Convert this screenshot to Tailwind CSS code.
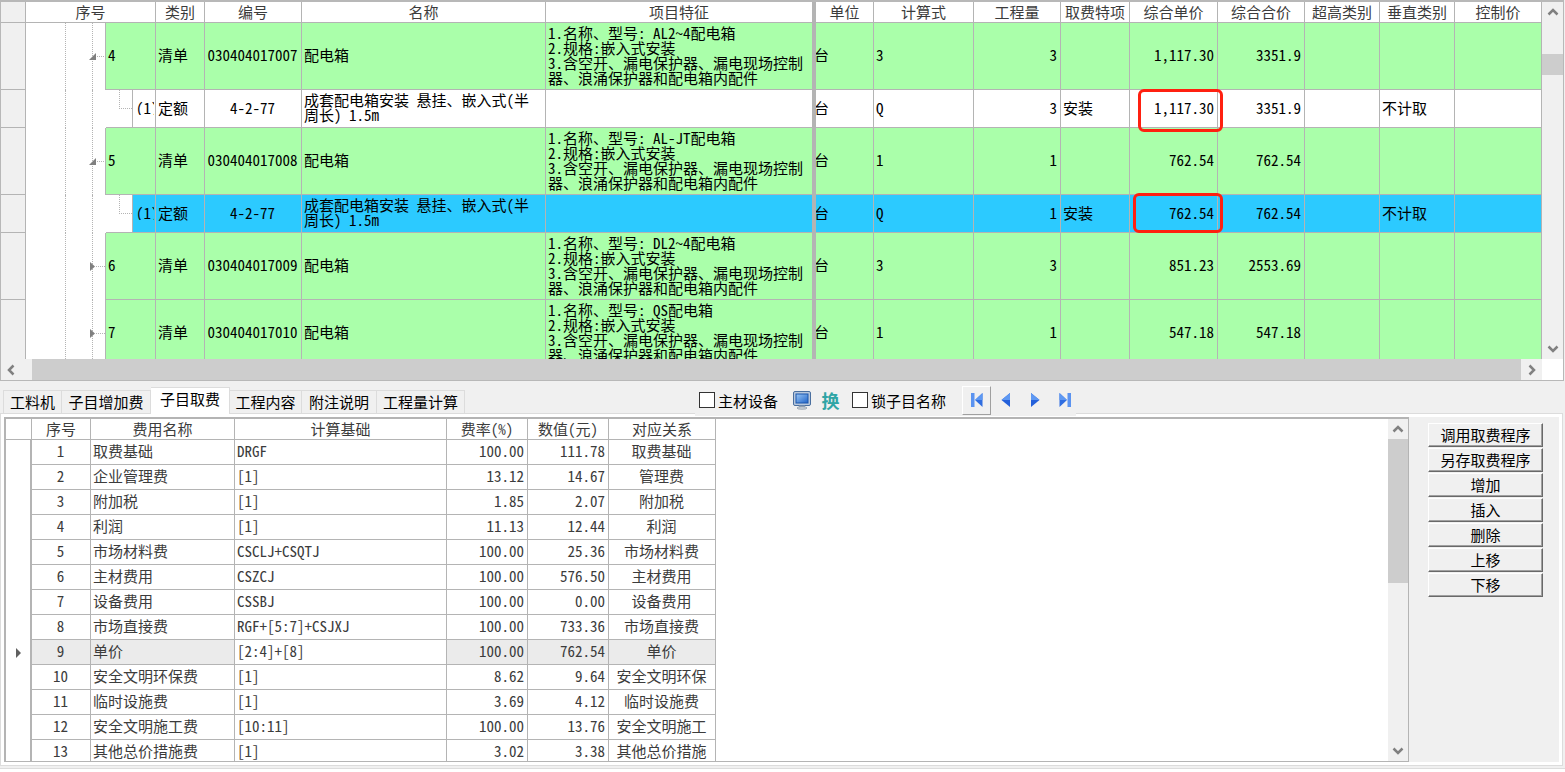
<!DOCTYPE html>
<html lang="zh-CN">
<head>
<meta charset="utf-8">
<title>子目取费</title>
<script src="https://cdn.jsdelivr.net/npm/@tailwindcss/browser@4"></script>
</head>
<body class="flex h-screen flex-col overflow-hidden bg-[#f0f0f0] font-['Noto_Sans_Mono_CJK_SC','Noto_Sans_CJK_SC',monospace] text-[15px] leading-[15px] text-black">

<!-- bill of quantities -->
<section class="mr-px flex h-[381px] shrink-0 flex-col border-x border-t-2 border-b border-[#b8b8b8] bg-white">
  <div class="flex min-h-0 flex-1">
    <div class="min-w-0 flex-1 overflow-hidden">
      <table class="w-full table-fixed border-separate border-spacing-0">
        <colgroup>
          <col class="w-[25px]"><col class="w-[40px]"><col class="w-[27px]"><col class="w-[13px]"><col class="w-[27px]"><col class="w-[23px]">
          <col class="w-[49px]"><col class="w-[97px]"><col class="w-[244px]"><col class="w-[270px]"><col class="w-[58px]"><col class="w-[100px]"><col class="w-[87px]"><col class="w-[69px]"><col class="w-[88px]"><col class="w-[87px]"><col class="w-[75px]"><col class="w-[75px]"><col>
        </colgroup>
        <thead>
          <tr class="h-[21px] text-[#3c3c3c] *:border-r *:border-b *:border-[#b4b4b4] *:p-0 *:pb-[2px] *:font-normal *:whitespace-nowrap">
            <th class="bg-[#f0f0f0]"></th><th colspan="5" scope="col">序号</th><th scope="col">类别</th><th scope="col">编号</th><th scope="col">名称</th><th scope="col" class="border-r-4!">项目特征</th><th scope="col">单位</th><th scope="col">计算式</th><th scope="col">工程量</th><th scope="col">取费特项</th><th scope="col">综合单价</th><th scope="col">综合合价</th><th scope="col">超高类别</th><th scope="col">垂直类别</th><th scope="col">控制价</th>
          </tr>
        </thead>
        <tbody id="bill"></tbody>
      </table>
    </div>
    <div class="flex w-[21px] shrink-0 flex-col items-center bg-[#f0f0f0]">
      <button type="button" aria-label="向上滚动" class="flex h-5 w-full items-center justify-center"><svg width="12" height="8" viewBox="0 0 12 8" fill="none" stroke="#808080" stroke-width="2.500"><path d="M1.500 6.500 6 2l4.500 4.500"/></svg></button>
      <div class="mt-8 h-[21px] w-full bg-[#cdcdcd]"></div>
      <button type="button" aria-label="向下滚动" class="mt-auto flex h-5 w-full items-center justify-center"><svg width="12" height="8" viewBox="0 0 12 8" fill="none" stroke="#808080" stroke-width="2.500"><path d="M1.500 1.500 6 6l4.500-4.500"/></svg></button>
    </div>
  </div>
  <div class="flex h-[21px] shrink-0">
    <button type="button" aria-label="向左滚动" class="flex w-[31px] items-center bg-[#f0f0f0] pl-[6px]"><svg width="8" height="12" viewBox="0 0 8 12" fill="none" stroke="#808080" stroke-width="2.500"><path d="M6.500 1.500 2 6l4.500 4.500"/></svg></button>
    <div class="flex-1 bg-[#cdcdcd]"></div>
    <button type="button" aria-label="向右滚动" class="flex w-[21px] items-center justify-center bg-[#f0f0f0]"><svg width="8" height="12" viewBox="0 0 8 12" fill="none" stroke="#808080" stroke-width="2.500"><path d="M1.500 1.500 6 6l-4.500 4.500"/></svg></button>
    <div class="w-[21px] bg-white"></div>
  </div>
</section>

<!-- tabs and toolbar -->
<div class="relative z-10 flex h-8 shrink-0 items-end pl-[3px]">
  <div role="tablist" class="flex flex-1 items-end whitespace-nowrap *:border *:border-b-0 *:border-[#dcdcdc]">
    <button type="button" role="tab" class="h-[23px] w-[59px] pb-[2px]">工料机</button>
    <button type="button" role="tab" class="h-[23px] w-[89px] border-l-0! pb-[2px]">子目增加费</button>
    <button type="button" role="tab" aria-selected="true" class="-mb-px h-[27px] w-[79px] border-l-0! bg-white pb-[5px]">子目取费</button>
    <button type="button" role="tab" class="h-[23px] w-[72px] border-l-0! pb-[2px]">工程内容</button>
    <button type="button" role="tab" class="h-[23px] w-[75px] border-l-0! pb-[2px]">附注说明</button>
    <button type="button" role="tab" class="h-[23px] w-[88px] border-l-0! pb-[2px]">工程量计算</button>
  </div>
  <div class="-mb-[3px] flex h-8 w-[870px] items-center">
    <div class="flex h-8 items-center bg-[#f0f0f0] pr-1 pl-1">
      <input id="mat" type="checkbox" class="size-4 appearance-none border border-[#333] bg-white"><label for="mat" class="ml-[3px] w-[60px] whitespace-nowrap">主材设备</label>
      <button type="button" aria-label="设备" class="ml-[14px]"><svg class="block" width="20" height="20" viewBox="0 0 20 20">
        <defs><linearGradient id="scr" x1="0" y1="0" x2="1" y2="1"><stop offset="0" stop-color="#9cc8f5"/><stop offset="1" stop-color="#1f63c8"/></linearGradient></defs>
        <rect x="1.500" y="1.500" width="17" height="14" rx="1.500" fill="#b8c8dc" stroke="#4a6f9f"/><rect x="4" y="4" width="12" height="9" fill="url(#scr)" stroke="#1d56ab"/><path d="M7 15.500h6v2H7z" fill="#8fa0b4"/><ellipse cx="10" cy="18" rx="5" ry="1.300" fill="#c9d0d8" stroke="#8a96a4" stroke-width=".7"/></svg></button>
      <button type="button" class="ml-[9px] w-[19px] text-lg leading-5 font-bold text-[#2fa5a5]">换</button>
      <input id="lock" type="checkbox" class="ml-[12px] size-4 appearance-none border border-[#333] bg-white"><label for="lock" class="ml-[3px] w-[75px] whitespace-nowrap">锁子目名称</label>
      <button type="button" aria-label="首条" class="ml-4 flex h-[29px] w-[29px] items-center justify-center border border-t-white border-r-[#a0a0a0] border-b-[#a0a0a0] border-l-white"><svg width="14" height="16" viewBox="0 0 14 16"><path d="M1 1h3.500v14H1z" fill="#5b93f0"/><path d="M12.500 1v14L5 8z" fill="#2f6de0"/><path d="M12.500 1 5 8h7.500z" fill="#5e98f2"/></svg></button>
      <button type="button" aria-label="上一条" class="ml-[10px]"><svg class="block" width="10" height="16" viewBox="0 0 10 16"><path d="M9 1v14L.5 8z" fill="#2460da"/><path d="M9 1 .5 8H9z" fill="#5e98f2"/></svg></button>
      <button type="button" aria-label="下一条" class="ml-[19px]"><svg class="block" width="10" height="16" viewBox="0 0 10 16"><path d="M1 1v14l8.500-7z" fill="#2460da"/><path d="M1 1l8.500 7H1z" fill="#5e98f2"/></svg></button>
      <button type="button" aria-label="末条" class="ml-[18px]"><svg class="block" width="14" height="16" viewBox="0 0 14 16"><path d="M9.500 1H13v14H9.500z" fill="#5b93f0"/><path d="M1.500 1v14L9 8z" fill="#2f6de0"/><path d="M1.500 1 9 8H1.500z" fill="#5e98f2"/></svg></button>
    </div>
  </div>
</div>

<!-- fee breakdown -->
<section class="mr-[2px] mb-[2px] flex min-h-0 flex-1 border border-[#dcdcdc] bg-white px-[3px] py-[3px]">
  <div class="flex min-w-0 flex-1 border-2 border-r border-b border-[#b4b4b4] bg-white text-[#3c3c3c]">
    <div class="min-w-0 flex-1 overflow-hidden">
      <table class="w-[710px] table-fixed border-separate border-spacing-0">
        <colgroup><col class="w-[26px]"><col class="w-[59px]"><col class="w-[144px]"><col class="w-[212px]"><col class="w-[81px]"><col class="w-[81px]"><col class="w-[107px]"></colgroup>
        <thead>
          <tr class="h-[21px] *:border-r *:border-b *:border-[#b4b4b4] *:p-0 *:pb-[2px] *:font-normal *:whitespace-nowrap"><th></th><th scope="col">序号</th><th scope="col">费用名称</th><th scope="col">计算基础</th><th scope="col">费率(%)</th><th scope="col">数值(元)</th><th scope="col">对应关系</th></tr>
        </thead>
        <tbody id="fees"></tbody>
      </table>
    </div>
    <div class="flex w-5 shrink-0 flex-col items-center bg-[#f0f0f0]">
      <button type="button" aria-label="向上滚动" class="flex h-5 w-full items-center justify-center"><svg width="12" height="8" viewBox="0 0 12 8" fill="none" stroke="#808080" stroke-width="2.500"><path d="M1.500 6.500 6 2l4.500 4.500"/></svg></button>
      <div class="h-36 w-full bg-[#cdcdcd]"></div>
      <button type="button" aria-label="向下滚动" class="mt-auto flex h-5 w-full items-center justify-center"><svg width="12" height="8" viewBox="0 0 12 8" fill="none" stroke="#808080" stroke-width="2.500"><path d="M1.500 1.500 6 6l4.500-4.500"/></svg></button>
    </div>
  </div>
  <div class="flex w-[150px] shrink-0 flex-col gap-px bg-[#f0f0f0] pt-[6px] pr-4 pl-[19px] *:h-6 *:shrink-0 *:border *:border-t-white *:border-r-[#696969] *:border-b-[#696969] *:border-l-white *:pb-[2px] *:shadow-[inset_-1px_-1px_#a0a0a0]">
    <button type="button">调用取费程序</button>
    <button type="button">另存取费程序</button>
    <button type="button">增加</button>
    <button type="button">插入</button>
    <button type="button">删除</button>
    <button type="button">上移</button>
    <button type="button">下移</button>
  </div>
</section>
<div class="h-1 shrink-0 border-t border-[#dcdcdc] bg-white"></div>

<script>
const item = (no, code, model, qty, price, total, open) => ({ no, code, model, qty, price, total, open });
const sub = (qty, price, total, selected, mark) => ({ child: true, qty, price, total, selected, mark });
const bill = [
  item('4', '030404017007', 'AL2~4', '3', '1,117.30', '3351.9', true),
  sub('3', '1,117.30', '3351.9', false, '-top-px -right-[6px] -bottom-[5px] left-2'),
  item('5', '030404017008', 'AL-JT', '1', '762.54', '762.54', true),
  sub('1', '762.54', '762.54', true, '-top-[2px] -right-[6px] -bottom-px left-[3px]'),
  item('6', '030404017009', 'DL2~4', '3', '851.23', '2553.69', false),
  item('7', '030404017010', 'QS', '1', '547.18', '547.18', false)
];
const line = 'border-r border-b border-[#b4b4b4]';
const tree = 'border-r border-dotted border-[#b4b4b4] bg-white p-0';
const arrow = open => open
  ? '<svg class="-ml-[5px] block" width="18" height="9" viewBox="0 0 18 9"><path d="M8 1v7H1z" fill="#808080"/><path d="M9 4.500h8" stroke="#b4b4b4" stroke-dasharray="1 1"/></svg>'
  : '<svg class="-ml-[5px] block" width="18" height="9" viewBox="0 0 18 9"><path d="M2 0v9l5-4.500z" fill="#808080"/><path d="M8 4.500h9" stroke="#b4b4b4" stroke-dasharray="1 1"/></svg>';
document.getElementById('bill').innerHTML = bill.map(r => {
  const bg = r.child ? (r.selected ? 'bg-[#2ccaff]' : 'bg-white') : 'bg-[#aaffaa]';
  const c = `${line} ${bg} pt-0 pr-[3px] pb-[3px] pl-[2px]`;
  const seq = r.child
    ? `<td class="bg-white p-0"></td><td class="border-r border-b border-r-[#b4b4b4] border-b-[#b4b4b4] bg-white p-0 align-top"><div class="ml-[13px] h-[19px] border-b border-l border-dotted border-[#b4b4b4]"></div></td><td class="${line} ${bg} pt-0 pr-px pb-[3px] pl-[3px]"><div class="overflow-hidden whitespace-nowrap">(1)</div></td>`
    : `<td class="border-r border-[#b4b4b4] bg-white p-0">${arrow(r.open)}</td><td colspan="2" class="${c}">${r.no}</td>`;
  const name = r.child ? '成套配电箱安装 悬挂、嵌入式(半<br>周长) 1.5m' : '配电箱';
  const feature = r.child ? '' : `1.名称、型号: ${r.model}配电箱<br>2.规格:嵌入式安装<br>3.含空开、漏电保护器、漏电现场控制<br>器、浪涌保护器和配电箱内配件`;
  const mark = r.mark ? `<div class="pointer-events-none absolute z-10 rounded-md border-[3px] border-[#ff2010] ${r.mark}"></div>` : '';
  return `<tr class="${r.child ? 'h-[38px]' : 'h-[67px]'}">
    <td class="${line} bg-[#f0f0f0] p-0"></td><td class="${tree}"></td><td class="${tree}"></td>${seq}
    <td class="${c}">${r.child ? '定额' : '清单'}</td>
    <td class="${c} text-center whitespace-nowrap">${r.child ? '4-2-77' : r.code}</td>
    <td class="${c} whitespace-nowrap">${name}</td>
    <td class="${c} border-r-4 whitespace-nowrap">${feature}</td>
    <td class="${line} ${bg} px-0 pt-0 pb-[3px]"><div class="overflow-hidden"><span class="-ml-[2px]">台</span></div></td>
    <td class="${c}">${r.child ? 'Q' : r.qty}</td>
    <td class="${c} text-right">${r.qty}</td>
    <td class="${c}">${r.child ? '安装' : ''}</td>
    <td class="${c} relative text-right">${r.price}${mark}</td>
    <td class="${c} text-right">${r.total}</td>
    <td class="${c}"></td><td class="${c}">${r.child ? '不计取' : ''}</td><td class="${c}"></td></tr>`;
}).join('');

const fees = [
  ['取费基础', 'DRGF', '100.00', '111.78', '取费基础'],
  ['企业管理费', '[1]', '13.12', '14.67', '管理费'],
  ['附加税', '[1]', '1.85', '2.07', '附加税'],
  ['利润', '[1]', '11.13', '12.44', '利润'],
  ['市场材料费', 'CSCLJ+CSQTJ', '100.00', '25.36', '市场材料费'],
  ['主材费用', 'CSZCJ', '100.00', '576.50', '主材费用'],
  ['设备费用', 'CSSBJ', '100.00', '0.00', '设备费用'],
  ['市场直接费', 'RGF+[5:7]+CSJXJ', '100.00', '733.36', '市场直接费'],
  ['单价', '[2:4]+[8]', '100.00', '762.54', '单价'],
  ['安全文明环保费', '[1]', '8.62', '9.64', '安全文明环保'],
  ['临时设施费', '[1]', '3.69', '4.12', '临时设施费'],
  ['安全文明施工费', '[10:11]', '100.00', '13.76', '安全文明施工'],
  ['其他总价措施费', '[1]', '3.02', '3.38', '其他总价措施']
];
document.getElementById('fees').innerHTML = fees.map((f, i) => {
  const pad = 'pt-0 pr-[3px] pb-[3px] pl-[2px]';
  const c = `${line} ${pad} whitespace-nowrap ${i === 8 ? 'bg-[#ebebeb]' : ''}`;
  return `<tr class="h-[25px]"><td class="border-r-2 border-[#b4b4b4] p-0">${i === 8 ? '<svg class="ml-[10px] block" width="6" height="10" viewBox="0 0 6 10"><path d="M0 0v10l5-5z" fill="#606060"/></svg>' : ''}</td>
    <td class="${c} text-center">${i + 1}</td><td class="${c}">${f[0]}</td><td class="${line} ${pad}">${f[1]}</td>
    <td class="${c} text-right">${f[2]}</td><td class="${c} text-right">${f[3]}</td><td class="${c} text-center">${f[4]}</td></tr>`;
}).join('');
</script>
</body>
</html>
